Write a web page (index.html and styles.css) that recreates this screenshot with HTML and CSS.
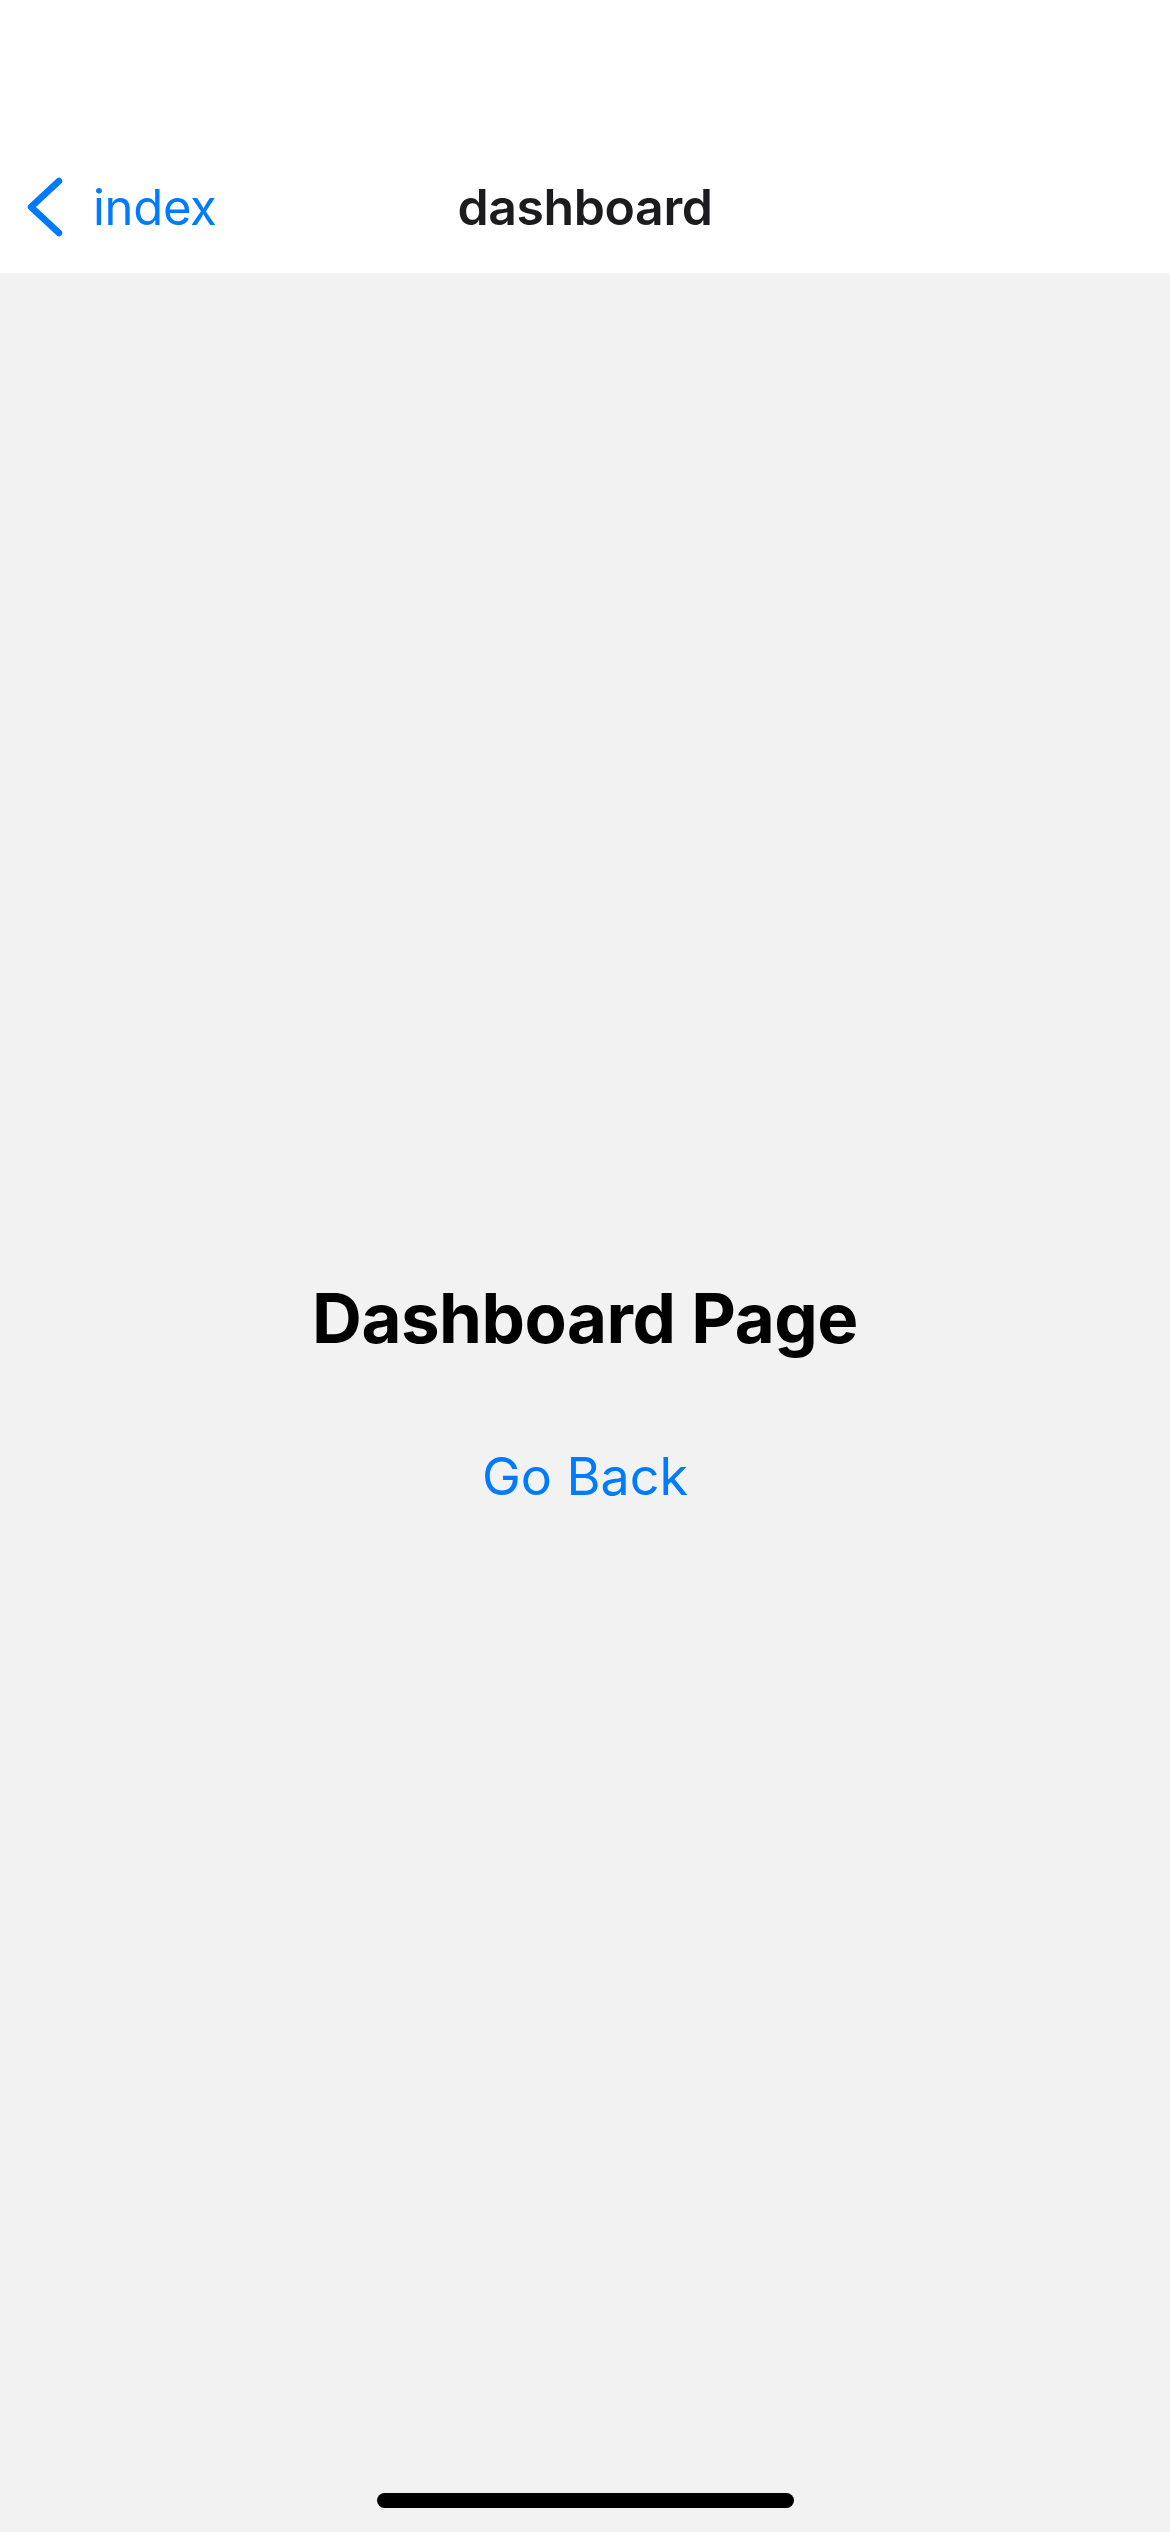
FILE: index.html
```html
<!DOCTYPE html>
<html>
<head>
<meta charset="utf-8">
<link rel="stylesheet" href="styles.css">
</head>
<body>
<div class="screen">
  <header class="header">
    <div class="status"></div>
    <nav class="navbar">
      <a class="back" href="#">
        <svg class="chev" width="40" height="64" viewBox="0 0 40 64"><path d="M34 6 L6 32 L34 58" fill="none" stroke="#007aff" stroke-width="6.5" stroke-linecap="round" stroke-linejoin="round"/></svg>
        <span class="back-label">index</span>
      </a>
      <div class="nav-title">dashboard</div>
      <div class="nav-right"></div>
    </nav>
  </header>
  <main class="content">
    <h1 class="page-title">Dashboard Page</h1>
    <a class="go-back" href="#">Go Back</a>
  </main>
  <div class="home-indicator"></div>
</div>
</body>
</html>
```
FILE: styles.css
```css
* { box-sizing: border-box; }
html, body { margin: 0; padding: 0; }
body {
  font-family: Inter, "Noto Sans", "Liberation Sans", sans-serif;
  background: #f2f2f2;
}
.screen {
  position: relative;
  width: 1170px;
  height: 2532px;
  display: flex;
  flex-direction: column;
  background: #f2f2f2;
}
.header {
  background: #ffffff;
  display: flex;
  flex-direction: column;
}
.status { height: 141px; }
.navbar {
  height: 132px;
  display: grid;
  grid-template-columns: 1fr auto 1fr;
  align-items: center;
}
.back {
  display: flex;
  align-items: center;
  gap: 28px;
  padding-left: 25px;
  text-decoration: none;
  color: #007aff;
}
.chev { display: block; }
.back-label {
  font-size: 49px;
  font-weight: 400;
  letter-spacing: -0.3px;
  line-height: 1;
}
.nav-title {
  font-size: 50px;
  font-weight: 600;
  color: #1c1c1e;
  letter-spacing: -0.4px;
  line-height: 1;
}
.content {
  flex: 1;
  display: flex;
  flex-direction: column;
  align-items: center;
  justify-content: center;
  padding-bottom: 20px;
}
.page-title {
  margin: 0;
  font-size: 69px;
  font-weight: 700;
  color: #000;
  line-height: 1.2;
  letter-spacing: -0.5px;
}
.go-back {
  margin-top: 86px;
  font-size: 52px;
  color: #007aff;
  text-decoration: none;
  line-height: 1.2;
}
.home-indicator {
  position: absolute;
  left: 377px;
  bottom: 24px;
  width: 417px;
  height: 15px;
  border-radius: 8px;
  background: #000;
}
```
